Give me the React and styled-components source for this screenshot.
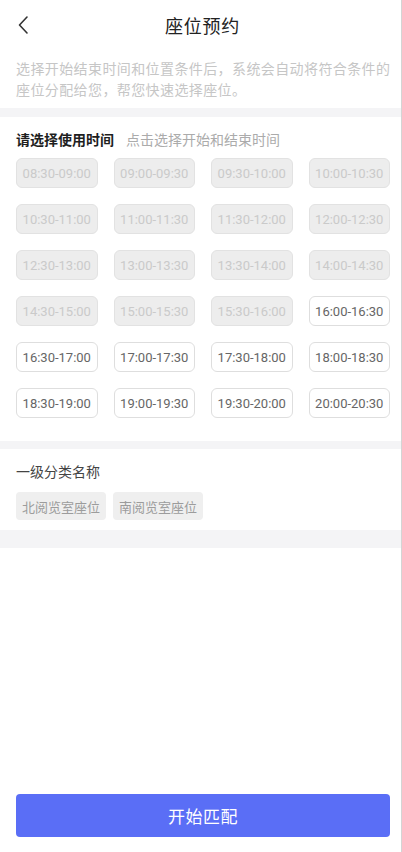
import React from "react";
import styled, { createGlobalStyle } from "styled-components";

const Global = createGlobalStyle`
  html, body { margin: 0; padding: 0; background: #fff; }
  body { font-family: "Noto Sans CJK SC", "Noto Sans", sans-serif; }
  * { box-sizing: border-box; }
`;

const Page = styled.div`
  width: 402px;
  min-height: 852px;
  display: flex;
  flex-direction: column;
  background: #fff;
  border-right: 1px solid #d4d4d4;
`;

const Header = styled.div`
  height: 50px;
  display: flex;
  align-items: center;
  justify-content: center;
  position: relative;
`;

const Back = styled.button`
  position: absolute;
  left: 12px;
  top: 12px;
  width: 22px;
  height: 26px;
  border: 0;
  background: none;
  padding: 0;
  display: flex;
  align-items: center;
  justify-content: center;
`;

const Title = styled.h1`
  margin: 0 0 0 4px;
  font-size: 18px;
  font-weight: 400;
  color: #222;
  letter-spacing: 0.8px;
`;

const Desc = styled.p`
  margin: 0;
  padding: 8px 8px 8px 16px;
  font-size: 14px;
  line-height: 21px;
  color: #c6c6c6;
  letter-spacing: 0.4px;
`;

const Band = styled.div`
  height: ${(p) => p.$h}px;
  background: #f4f4f6;
`;

const Section = styled.div`
  padding: ${(p) => p.$pad};
`;

const SectionHead = styled.div`
  display: flex;
  align-items: baseline;
  gap: 12px;
  height: 20px;
  line-height: 20px;
`;

const Strong = styled.span`
  font-size: 14px;
  font-weight: 700;
  color: #1e1e1e;
`;

const Hint = styled.span`
  font-size: 14px;
  color: #ababab;
`;

const Grid = styled.div`
  display: grid;
  grid-template-columns: repeat(4, 1fr);
  column-gap: 16px;
  row-gap: 16px;
  margin-top: 9px;
`;

const Slot = styled.div`
  height: 30px;
  border-radius: 6px;
  display: flex;
  align-items: center;
  justify-content: center;
  font-family: Roboto, "Noto Sans", sans-serif;
  font-size: 13px;
  border: 1px solid ${(p) => (p.$disabled ? "#e2e2e2" : "#dedede")};
  background: ${(p) => (p.$disabled ? "#ededed" : "#fff")};
  color: ${(p) => (p.$disabled ? "#cacaca" : "#666")};
`;

const Label = styled.div`
  font-size: 14px;
  color: #444;
  line-height: 20px;
`;

const Tags = styled.div`
  display: flex;
  gap: 7px;
  margin-top: 11px;
`;

const Tag = styled.div`
  height: 28px;
  padding: 0 6px;
  border-radius: 4px;
  background: #efefef;
  color: #9c9c9c;
  font-size: 13px;
  display: flex;
  align-items: center;
`;

const Footer = styled.div`
  margin-top: auto;
  padding: 0 11px 15px 16px;
`;

const Primary = styled.button`
  width: 100%;
  height: 43px;
  border: 0;
  border-radius: 4px;
  background: #5a6ef6;
  color: #fff;
  font-family: "Noto Sans CJK SC", sans-serif;
  font-size: 17px;
  letter-spacing: 0.5px;
`;

const slots = [
  "08:30-09:00", "09:00-09:30", "09:30-10:00", "10:00-10:30",
  "10:30-11:00", "11:00-11:30", "11:30-12:00", "12:00-12:30",
  "12:30-13:00", "13:00-13:30", "13:30-14:00", "14:00-14:30",
  "14:30-15:00", "15:00-15:30", "15:30-16:00", "16:00-16:30",
  "16:30-17:00", "17:00-17:30", "17:30-18:00", "18:00-18:30",
  "18:30-19:00", "19:00-19:30", "19:30-20:00", "20:00-20:30",
];

export default function App() {
  return (
    <>
      <Global />
      <Page>
        <Header>
          <Back aria-label="返回">
            <svg width="12" height="20" viewBox="0 0 12 20">
              <path d="M10 2 L2.5 10 L10 18" fill="none" stroke="#333" strokeWidth="1.6" strokeLinecap="round" strokeLinejoin="round" />
            </svg>
          </Back>
          <Title>座位预约</Title>
        </Header>
        <Desc>选择开始结束时间和位置条件后，系统会自动将符合条件的座位分配给您，帮您快速选择座位。</Desc>
        <Band $h={9} />
        <Section $pad="12px 11px 23px 16px">
          <SectionHead>
            <Strong>请选择使用时间</Strong>
            <Hint>点击选择开始和结束时间</Hint>
          </SectionHead>
          <Grid>
            {slots.map((s, i) => (
              <Slot key={s} $disabled={i < 15}>{s}</Slot>
            ))}
          </Grid>
        </Section>
        <Band $h={8} />
        <Section $pad="12px 11px 10px 16px">
          <Label>一级分类名称</Label>
          <Tags>
            <Tag>北阅览室座位</Tag>
            <Tag>南阅览室座位</Tag>
          </Tags>
        </Section>
        <Band $h={18} />
        <Footer>
          <Primary>开始匹配</Primary>
        </Footer>
      </Page>
    </>
  );
}
